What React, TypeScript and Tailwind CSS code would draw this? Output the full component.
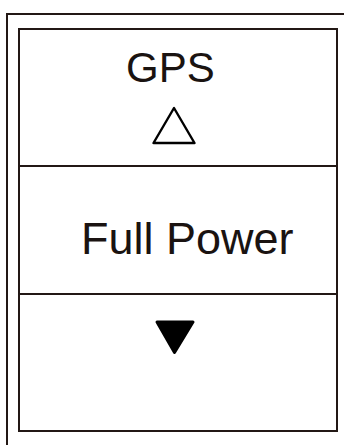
import React from "react";

export default function App() {
  const c = "#231815";
  return (
    <div
      className="w-[344px] h-[447px] bg-white pt-[13px] pl-[6px] overflow-hidden"
      style={{ fontFamily: '"Liberation Sans", Arial, sans-serif' }}
    >
      <div className="border-t-2 border-l-2 border-[#231815] pt-[13px] pl-[10px] pb-[13px]">
        <div className="w-[320px] border-2 border-[#231815] flex flex-col text-[#1a1311]">
          <div className="h-[135px] flex flex-col items-start">
            <div className="mt-[17px] pl-[106px] text-[42px] leading-[42px]">GPS</div>
            <svg
              className="mt-[15px] ml-[130px]"
              width="48"
              height="42"
              viewBox="0 0 48 42"
            >
              <polygon
                points="24,4 3.5,39 44.5,39"
                fill="none"
                stroke="#000"
                strokeWidth="2.4"
                strokeLinejoin="round"
              />
            </svg>
          </div>
          <div className="h-[130px] border-y-2 border-[#231815]">
            <div className="mt-[49px] pl-[61px] text-[45px] leading-[45px]">Full Power</div>
          </div>
          <div className="h-[135px] flex flex-col items-start">
            <svg
              className="mt-[21px] ml-[130px]"
              width="48"
              height="42"
              viewBox="0 0 48 42"
            >
              <polygon
                points="7,6 43,6 24.5,36.5"
                fill="#000"
                stroke="#000"
                strokeWidth="3"
                strokeLinejoin="round"
              />
            </svg>
          </div>
        </div>
      </div>
      <span className="hidden">{c}</span>
    </div>
  );
}
